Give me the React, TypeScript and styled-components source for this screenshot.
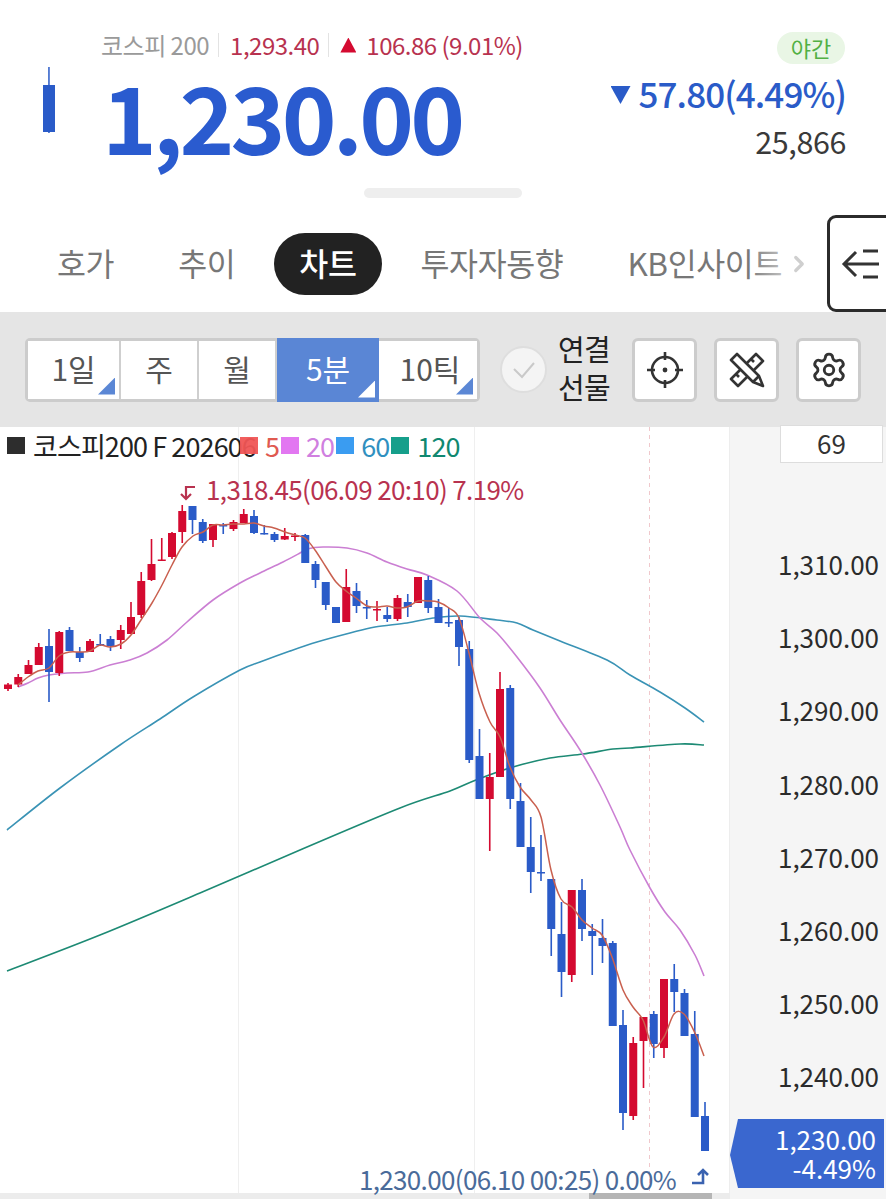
import React from "react";
import styled, { createGlobalStyle } from "styled-components";
import { ChevronRight, Settings } from "lucide-react";

type Candle = [number, number, number, number, number];

// [up, wick top, body top, body bottom, wick bottom] in page pixels
const candles: Candle[] = [
  [1, 683, 684.5, 689, 691], [1, 674, 677, 684.5, 687], [1, 660, 665, 674, 674], [1, 643, 647, 665, 665],
  [0, 629, 646, 672, 702], [1, 631, 632, 673, 676], [0, 627, 630, 651, 651], [0, 647, 652, 658, 662],
  [1, 639, 641, 652, 652], [0, 634, 644, 645.5, 646], [0, 636, 639, 646, 651], [1, 625, 630, 640, 649],
  [1, 602, 617, 634, 634], [1, 572, 581, 615, 618], [1, 539, 564, 580, 581], [1, 538, 559.5, 561, 561],
  [1, 532, 533, 557, 559], [1, 505, 511, 532, 543], [0, 506, 506, 520, 534], [0, 519, 522, 541, 543],
  [1, 524, 524, 540, 547], [0, 523, 525, 526.5, 534], [1, 520, 522, 529, 531], [1, 509, 514, 523, 523],
  [0, 510, 516, 533, 534], [0, 525, 533, 534.5, 534.5], [0, 532, 534, 540, 542], [1, 528, 536, 539.5, 540],
  [1, 533, 535.5, 537, 541], [0, 534, 535, 563, 563], [0, 561, 564, 580, 588], [0, 582, 582, 605, 610],
  [0, 607, 607, 623, 623], [1, 569, 587, 622, 622], [0, 583, 591, 606, 613], [0, 600, 607, 608.5, 619],
  [1, 601, 609, 610.5, 621], [0, 607, 615, 619, 622], [1, 595, 598, 619, 621], [0, 594, 602, 607, 617],
  [1, 577, 577, 603, 603], [0, 576, 580, 608, 613], [0, 599, 607, 623, 623], [0, 608, 622, 623.5, 627],
  [0, 617, 620, 647, 666], [0, 641, 649, 760, 763], [0, 729, 756, 799, 799], [1, 753, 777, 799, 851],
  [1, 672, 689, 777, 777], [0, 685, 688, 799, 809], [0, 783, 801, 847, 847], [0, 817, 847, 872, 893],
  [0, 835, 872, 873.5, 881], [0, 879, 879, 929, 956], [0, 902, 934, 972, 997], [1, 890, 890, 975, 982],
  [0, 879, 890, 929, 941], [0, 924, 931, 936, 975], [0, 919, 938, 946, 963], [0, 941, 943, 1026, 1026],
  [0, 1010, 1025, 1113, 1130], [1, 1037, 1043, 1116, 1120], [1, 1017, 1017, 1041, 1088], [0, 1011, 1014, 1044, 1058],
  [1, 979, 979, 1048, 1058], [0, 964, 979, 992, 1012], [0, 989, 993, 1036, 1036], [0, 1011, 1034, 1117, 1117],
  [0, 1102, 1116, 1151, 1151],
];

const ma5 =
  "18,685 28,677 38,671 49,668 59,656 70,652 80,652 90,651 100,645 110,647 121,644 131,635 141,620 152,603 162,585 172,565 182,547 193,536 203,532 213,525 223,525 233,524 244,524 254,523 264,526 274,528 285,532 295,535 305,538 315,550 326,567 336,582 346,591 356,598 367,606 377,607 387,606 397,608 407,607 418,601 428,601 438,602 449,608 459,618 469,653 479,693 490,722 500,737 510,767 520,787 531,800 541,817 551,870 561,899 572,907 582,920 592,928 602,935 612,957 623,990 633,1007 643,1020 653,1047 664,1037 674,1014 684,1014 695,1033 704,1056";
const ma20 =
  "18,687 28,683 38,678 49,675 67,673 88,672 110,665 130,660 147,653 167,640 187,622 213,600 240,583 260,573 283,562 300,553 307,549 323,547 347,548 367,553 387,562 407,569 427,575 457,591 480,618 497,633 517,657 540,688 560,720 580,750 600,785 620,827 630,850 650,888 665,912 680,930 695,955 704,976";
const ma60 =
  "7,830 60,788 120,745 160,719 193,697 240,670 260,662 290,651 317,642 350,633 375,627 407,623 433,618 460,616 497,620 517,623 533,630 560,641 607,660 630,675 660,692 685,708 704,722";
const ma120 =
  "7,971 100,935 200,893 300,850 400,808 450,791 476,780 513,767 550,758 583,754 613,749 630,748 680,744 704,745";

const axisPrices = ["1,310.00", "1,300.00", "1,290.00", "1,280.00", "1,270.00", "1,260.00", "1,250.00", "1,240.00"];

// turns "x,y x,y" into a smooth curve through the same points
const smoothPath = (points: string) => {
  const pts = points.split(" ").map((pair) => pair.split(",").map(Number));
  let d = `M${pts[0][0]} ${pts[0][1]}`;
  for (let i = 0; i < pts.length - 1; i++) {
    const p0 = pts[Math.max(i - 1, 0)];
    const p1 = pts[i];
    const p2 = pts[i + 1];
    const p3 = pts[Math.min(i + 2, pts.length - 1)];
    const c1x = p1[0] + (p2[0] - p0[0]) / 6;
    const c1y = p1[1] + (p2[1] - p0[1]) / 6;
    const c2x = p2[0] - (p3[0] - p1[0]) / 6;
    const c2y = p2[1] - (p3[1] - p1[1]) / 6;
    d += `C${c1x} ${c1y} ${c2x} ${c2y} ${p2[0]} ${p2[1]}`;
  }
  return d;
};

const GlobalStyle = createGlobalStyle`
  html, body {
    margin: 0;
    padding: 0;
    background: #fff;
  }
  * {
    box-sizing: border-box;
  }
`;

const App = () => {
  return (
    <>
      <GlobalStyle />
      <Page>
        <Quote>
          <QuoteRow>
            <QuoteLeft>
              <svg width="14" height="66" viewBox="0 0 14 66">
                <rect x="1" y="18" width="12" height="47" fill="#2a5bc8" />
                <rect x="6.2" y="0" width="1.5" height="66" fill="#2a5bc8" />
              </svg>
              <QuoteMain>
                <SubRow>
                  <SubName>코스피 200</SubName>
                  <SubDivider />
                  <SubValue>1,293.40</SubValue>
                  <SubDivider />
                  <UpMark />
                  <SubValue>106.86 (9.01%)</SubValue>
                </SubRow>
                <BigPrice>1,230.00</BigPrice>
              </QuoteMain>
            </QuoteLeft>
            <QuoteRight>
              <SessionBadge>야간</SessionBadge>
              <Change>
                <DownMark />
                57.80(4.49%)
              </Change>
              <Volume>25,866</Volume>
            </QuoteRight>
          </QuoteRow>
          <Handle />
        </Quote>

        <TabRow>
          <TabList>
            <Tab>호가</Tab>
            <Tab>추이</Tab>
            <Tab $active>차트</Tab>
            <Tab>투자자동향</Tab>
            <Tab>KB인사이트</Tab>
            <TabFade>
              <ChevronRight size={26} color="#cfcfcf" strokeWidth={3} />
            </TabFade>
          </TabList>
          <SideButton>
            <svg width="40" height="34" viewBox="0 0 40 34" fill="none" stroke="#333" strokeWidth="3">
              <path d="M38 17H3M15 5 3 17l12 12M22 4h15M22 30h15" />
            </svg>
          </SideButton>
        </TabRow>

        <Toolbar>
          <Segments>
            <Segment $width={93} $corner>1일</Segment>
            <Segment $width={78}>주</Segment>
            <Segment $width={78}>월</Segment>
            <Segment $width={102} $active $corner>5분</Segment>
            <Segment $width={98} $corner $last>10틱</Segment>
          </Segments>
          <CheckCircle>
            <svg width="24" height="18" viewBox="0 0 24 18" fill="none" stroke="#c9c9c9" strokeWidth="2">
              <path d="M2 8l8 8L22 2" />
            </svg>
          </CheckCircle>
          <ConnectLabel>
            연결
            <br />
            선물
          </ConnectLabel>
          <ToolButtons>
            <ToolButton>
              <svg width="38" height="38" viewBox="0 0 38 38" fill="none" stroke="#333" strokeWidth="2.6">
                <circle cx="19" cy="19" r="13" />
                <path d="M19 1v8M19 29v8M1 19h8M29 19h8" />
                <circle cx="19" cy="19" r="2.4" fill="#333" stroke="none" />
              </svg>
            </ToolButton>
            <ToolButton>
              <svg width="36" height="36" viewBox="0 0 36 36" fill="none" stroke="#333" strokeWidth="2.6" strokeLinejoin="round">
                <path d="M27 2l7 7L9 34l-7-7zM22 7l3 3M17 12l3 3M12 17l3 3M7 22l3 3" />
                <path d="M8 2 2 8l22 22 10 4-4-10z" fill="#fff" />
                <path d="M24 30l6-6" />
              </svg>
            </ToolButton>
            <ToolButton>
              <Settings size={38} color="#333" strokeWidth={1.8} />
            </ToolButton>
          </ToolButtons>
        </Toolbar>

        <ChartBody>
          <Plot>
            <svg width="729" height="766" viewBox="0 427 729 766">
              <path d="M238.5 427V1193M474.5 427V1193" stroke="#efefef" strokeWidth="1" />
              <path d="M649.5 427V1193" stroke="#f0c8cc" strokeWidth="1" strokeDasharray="4 4" />
              <path d={smoothPath(ma120)} fill="none" stroke="#1d8a74" strokeWidth="1.6" />
              <path d={smoothPath(ma60)} fill="none" stroke="#3a93b5" strokeWidth="1.6" />
              <path d={smoothPath(ma20)} fill="none" stroke="#cb7fd3" strokeWidth="1.6" />
              {candles.map(([up, wickTop, bodyTop, bodyBottom, wickBottom], i) => {
                const x = 8 + 10.25 * i;
                const color = up ? "#d40a30" : "#2a5bc8";
                return (
                  <g key={i} fill={color}>
                    <rect x={x - 0.8} y={wickTop} width="1.6" height={wickBottom - wickTop} />
                    <rect x={x - 4} y={bodyTop} width="8" height={bodyBottom - bodyTop} />
                  </g>
                );
              })}
              <path d={smoothPath(ma5)} fill="none" stroke="#c9604f" strokeWidth="1.5" />
            </svg>
            <Legend>
              <LegendSwatch $color="#222" $gap={8} />
              <LegendName>코스피200 F 202606</LegendName>
              <LegendSwatch $color="#f05555" $gap={7} $overlap={16} />
              <LegendValue $color="#e05a50">5</LegendValue>
              <LegendSwatch $color="#e070f0" $gap={7} />
              <LegendValue $color="#d07fe0">20</LegendValue>
              <LegendSwatch $color="#2f97f0" $gap={7} />
              <LegendValue $color="#3090c0">60</LegendValue>
              <LegendSwatch $color="#0a9a85" $gap={8} />
              <LegendValue $color="#108870">120</LegendValue>
            </Legend>
            <HighNote>
              <svg width="18" height="16" viewBox="0 0 18 16" fill="none" stroke="#b8324f" strokeWidth="2.2">
                <path d="M16 2H7v12M2 9l5 5 5-5" />
              </svg>
              1,318.45(06.09 20:10) 7.19%
            </HighNote>
            <LowNote>
              1,230.00(06.10 00:25) 0.00%
              <svg width="20" height="18" viewBox="0 0 20 18" fill="none" stroke="#3a62b0" strokeWidth="2.6">
                <path d="M1 16h11V3M7 8l5-5 5 5" />
              </svg>
            </LowNote>
          </Plot>
          <Axis>
            <CountBox>69</CountBox>
            <AxisLabels>
              {axisPrices.map((price) => (
                <AxisLabel key={price}>{price}</AxisLabel>
              ))}
            </AxisLabels>
            <PriceTag>
              <span>1,230.00</span>
              <span>-4.49%</span>
            </PriceTag>
          </Axis>
        </ChartBody>
        <ScrollTrack>
          <ScrollThumb />
        </ScrollTrack>
      </Page>
    </>
  );
};

const Page = styled.div`
  display: flex;
  flex-direction: column;
  width: 886px;
  height: 1199px;
  overflow: hidden;
  background: #fff;
  font-family: "Noto Sans CJK KR", "Noto Sans", sans-serif;
`;

const Quote = styled.section`
  display: flex;
  flex-direction: column;
  height: 205px;
  padding: 32px 40px 7px 42px;
`;

const QuoteRow = styled.div`
  display: flex;
  justify-content: space-between;
`;

const QuoteLeft = styled.div`
  display: flex;
  align-items: flex-start;
  svg {
    margin-top: 35px;
  }
`;

const QuoteMain = styled.div`
  display: flex;
  flex-direction: column;
  margin-left: 45px;
`;

const SubRow = styled.div`
  display: flex;
  align-items: center;
  height: 30px;
  margin-top: -2px;
  font-size: 24px;
  line-height: 30px;
  letter-spacing: -0.5px;
`;

const SubName = styled.span`
  color: #9a9a9a;
`;

const SubValue = styled.span`
  color: #b8324f;
`;

const SubDivider = styled.i`
  width: 1px;
  height: 24px;
  margin: 0 11px 0 9px;
  background: #e3e3e3;
`;

const UpMark = styled.i`
  width: 16px;
  height: 15px;
  margin-right: 10px;
  background: #d40a30;
  clip-path: polygon(50% 0, 100% 100%, 0 100%);
`;

const BigPrice = styled.div`
  margin: 9px 0 0 1px;
  font-size: 93px;
  line-height: 92px;
  font-weight: 700;
  letter-spacing: -3.8px;
  color: #2a5bcf;
`;

const QuoteRight = styled.div`
  display: flex;
  flex-direction: column;
  align-items: flex-end;
`;

const SessionBadge = styled.div`
  width: 68px;
  height: 32px;
  margin-right: 1px;
  border-radius: 16px;
  background: #e9f6e5;
  color: #52b044;
  font-size: 22px;
  line-height: 30px;
  text-align: center;
`;

const Change = styled.div`
  display: flex;
  align-items: center;
  margin-top: 9px;
  font-size: 35px;
  line-height: 40px;
  font-weight: 500;
  letter-spacing: -0.9px;
  color: #2a5bc8;
`;

const DownMark = styled.i`
  width: 20px;
  height: 18px;
  margin: 4px 8px 0 0;
  background: #2a5bc8;
  clip-path: polygon(0 0, 100% 0, 50% 100%);
`;

const Volume = styled.div`
  margin-top: 10px;
  font-size: 30.5px;
  line-height: 36px;
  letter-spacing: -0.4px;
  color: #3a3a3a;
`;

const Handle = styled.div`
  align-self: center;
  width: 158px;
  height: 10px;
  margin: auto 0 0 -2px;
  border-radius: 5px;
  background: #eeeeee;
`;

const TabRow = styled.nav`
  display: flex;
  height: 107px;
`;

const TabList = styled.div`
  position: relative;
  display: flex;
  flex: 1;
  gap: 14px;
  align-items: center;
  min-width: 0;
  padding: 11px 0 0 32px;
  overflow: hidden;
`;

const Tab = styled.div<{ $active?: boolean }>`
  flex-shrink: 0;
  height: 62px;
  padding: 0 25px;
  border-radius: 31px;
  background: ${(p) => (p.$active ? "#222" : "transparent")};
  color: ${(p) => (p.$active ? "#fff" : "#777")};
  font-size: 31.5px;
  line-height: 58px;
  font-weight: ${(p) => (p.$active ? 500 : 400)};
  letter-spacing: -0.4px;
`;

const TabFade = styled.div`
  position: absolute;
  top: 11px;
  right: 0;
  bottom: 0;
  display: flex;
  align-items: center;
  justify-content: flex-end;
  width: 80px;
  padding-right: 15px;
  background: linear-gradient(to right, rgba(255, 255, 255, 0), #fff 85%);
`;

const SideButton = styled.div`
  display: flex;
  flex-shrink: 0;
  align-items: center;
  align-self: flex-end;
  width: 70px;
  height: 97px;
  margin-right: -11px;
  padding-left: 11px;
  border: 3px solid #2b2b2b;
  border-radius: 9px;
  background: #fff;
`;

const Toolbar = styled.div`
  display: flex;
  align-items: center;
  height: 115px;
  padding-left: 25px;
  background: #e5e5e5;
`;

const Segments = styled.div`
  display: flex;
  height: 64px;
  border: 3px solid #cccccc;
  border-radius: 5px;
  background: #fff;
`;

const Segment = styled.div<{ $width: number; $active?: boolean; $corner?: boolean; $last?: boolean }>`
  position: relative;
  width: ${(p) => p.$width}px;
  margin: ${(p) => (p.$active ? "-3px 0" : "0")};
  padding-left: ${(p) => (p.$last ? "4px" : "0")};
  border-right: ${(p) => (p.$active || p.$last ? "0" : "2px solid #cfcfcf")};
  background: ${(p) => (p.$active ? "#5a86d5" : "#fff")};
  color: ${(p) => (p.$active ? "#fff" : "#555")};
  font-size: 30px;
  line-height: ${(p) => (p.$active ? "60px" : "54px")};
  text-align: center;
  &::after {
    content: "";
    display: ${(p) => (p.$corner ? "block" : "none")};
    position: absolute;
    right: 4px;
    bottom: 4px;
    width: 17px;
    height: 17px;
    background: ${(p) => (p.$active ? "#fff" : "#5b87d5")};
    clip-path: polygon(100% 0, 100% 100%, 0 100%);
  }
`;

const CheckCircle = styled.div`
  display: flex;
  align-items: center;
  justify-content: center;
  width: 47px;
  height: 47px;
  margin-left: 20px;
  border: 2px solid #dedede;
  border-radius: 50%;
  background: #f4f4f4;
`;

const ConnectLabel = styled.div`
  width: 56px;
  margin: -5px 0 0 11px;
  font-size: 29px;
  line-height: 38px;
  letter-spacing: -0.6px;
  color: #222;
`;

const ToolButtons = styled.div`
  display: flex;
  gap: 17px;
  margin-left: 18px;
`;

const ToolButton = styled.div`
  display: flex;
  align-items: center;
  justify-content: center;
  width: 65px;
  height: 64px;
  border: 3px solid #cccccc;
  border-radius: 6px;
  background: #fff;
`;

const ChartBody = styled.div`
  display: flex;
  height: 766px;
`;

const Plot = styled.div`
  position: relative;
  width: 730px;
  height: 766px;
  background: #fff;
  border-right: 1px solid #ededed;
  svg {
    display: block;
  }
`;

const Legend = styled.div`
  position: absolute;
  top: 1px;
  left: 7px;
  display: flex;
  align-items: center;
  height: 34px;
  font-size: 27px;
  letter-spacing: -0.9px;
`;

const LegendSwatch = styled.i<{ $color: string; $gap: number; $overlap?: number }>`
  width: 18px;
  height: 17px;
  margin-left: ${(p) => -(p.$overlap ?? 0)}px;
  margin-right: ${(p) => p.$gap}px;
  background: ${(p) => p.$color};
  opacity: 0.95;
`;

const LegendName = styled.span`
  color: #222;
  white-space: nowrap;
`;

const LegendValue = styled.span<{ $color: string }>`
  margin-right: 2px;
  color: ${(p) => p.$color};
`;

const HighNote = styled.div`
  position: absolute;
  top: 45px;
  left: 179px;
  display: flex;
  gap: 9px;
  align-items: center;
  font-size: 26px;
  line-height: 34px;
  letter-spacing: -0.63px;
  color: #b8324f;
  white-space: nowrap;
  svg {
    margin-top: 8px;
  }
`;

const LowNote = styled.div`
  position: absolute;
  right: 18px;
  bottom: -3px;
  display: flex;
  gap: 15px;
  align-items: center;
  font-size: 26px;
  line-height: 34px;
  letter-spacing: -0.65px;
  color: #4a6b9a;
  white-space: nowrap;
  svg {
    margin-top: -6px;
  }
`;

const Axis = styled.div`
  display: flex;
  flex: 1;
  flex-direction: column;
  height: 772px;
  background: #f5f5f5;
`;

const CountBox = styled.div`
  align-self: flex-end;
  width: 103px;
  height: 38px;
  margin: -2px 3px 0 0;
  border: 1px solid #dddddd;
  background: #fff;
  font-size: 26px;
  line-height: 34px;
  text-align: center;
  color: #333;
`;

const AxisLabels = styled.div`
  display: flex;
  flex-direction: column;
  margin-top: 64px;
  padding-right: 7px;
`;

const AxisLabel = styled.div`
  height: 73.2px;
  font-size: 26px;
  line-height: 73.2px;
  text-align: right;
  color: #2b2b2b;
`;

const PriceTag = styled.div`
  display: flex;
  flex-direction: column;
  align-items: flex-end;
  height: 69px;
  margin: auto 2px 11px 0;
  padding: 5px 8px 0 0;
  background: #3a67cf;
  clip-path: polygon(8px 0, 100% 0, 100% 100%, 8px 100%, 0 52%);
  color: #fff;
  font-size: 26px;
  line-height: 29px;
`;

const ScrollTrack = styled.div`
  display: flex;
  width: 730px;
  height: 6px;
  padding-left: 589px;
  background: #ececec;
`;

const ScrollThumb = styled.div`
  width: 123px;
  background: #b5b5b5;
`;

export default App;
